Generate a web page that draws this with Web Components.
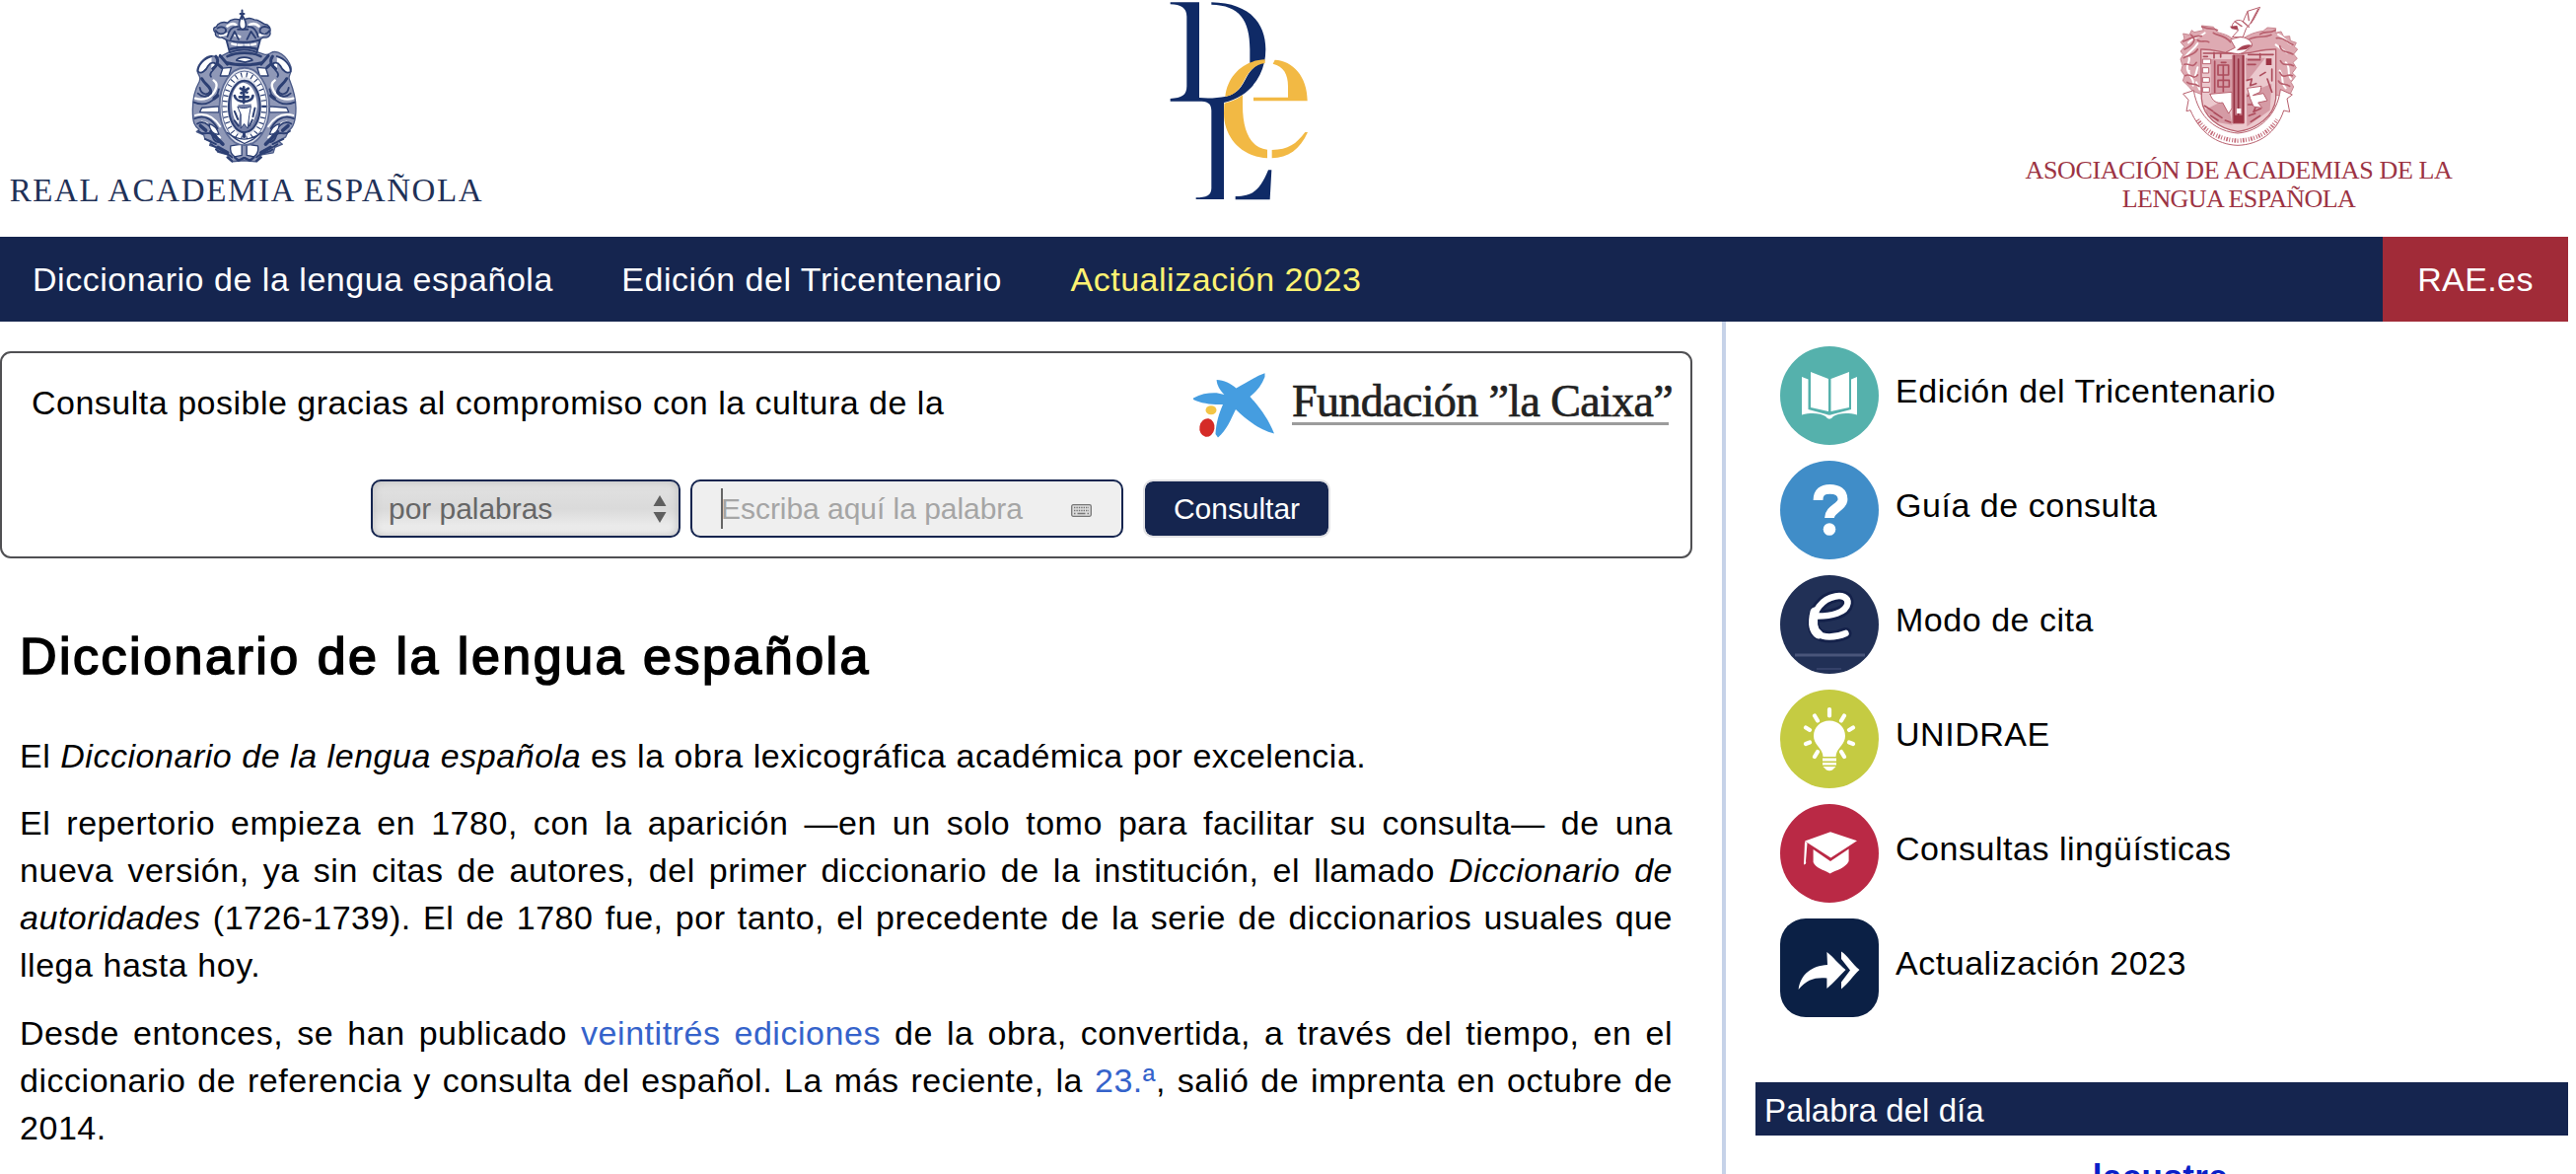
<!DOCTYPE html>
<html lang="es">
<head>
<meta charset="utf-8">
<title>Diccionario de la lengua española</title>
<style>
html,body{margin:0;background:#fff}
body{height:1190px;overflow:hidden;font-family:"Liberation Sans",Arial,sans-serif;font-size:34px;letter-spacing:.53px;color:#000}
</style>
</head>
<body>
<dle-page></dle-page>
<script>
const define=(name,html,setup)=>customElements.define(name,class extends HTMLElement{
  connectedCallback(){
    if(this.shadowRoot)return;
    const t=document.createElement('template');
    t.innerHTML=html;
    const root=this.attachShadow({mode:'open'});
    root.append(t.content.cloneNode(true));
    if(setup)setup(this,root);
  }
});

/* Crest of the Real Academia: crown, mantling and oval medallion */
define('rae-crest',`<style>:host{display:block;width:107px;height:158px}svg{display:block;width:100%;height:100%}</style>
<svg viewBox="580 28 322 474" fill="none" stroke="#2c3f73" stroke-width="5.500" stroke-linecap="round" stroke-linejoin="round">
<path fill="#8f98b7" stroke="#4a5a88" stroke-width="4" d="M735 150C690 150 668 185 650 172C625 165 600 195 598 215C600 232 612 232 604 250C590 275 584 305 584 335C584 375 590 385 604 395L596 402L618 412L622 425L640 430L636 444L655 450L660 464L690 472L705 493L740 490L775 493L795 472L830 466L835 450L858 440L845 430L868 418L876 400C892 390 899 360 899 330C899 300 890 270 880 245C872 232 888 225 884 205C872 170 842 150 822 162C800 178 785 150 735 150Z"/>
<g id="h">
<path fill="#fff" d="M642 172C618 178 600 200 600 218C610 228 625 215 632 200C640 188 655 190 655 200C652 214 630 222 640 234"/>
<path fill="#fff" stroke-width="4" d="M676 208L702 206L694 232L668 232Z"/>
<path stroke-width="9" d="M655 172C665 185 660 200 645 210M612 240C622 260 640 262 640 282M668 170L690 196M660 195L672 206"/>
<path stroke="#fff" stroke-width="7" d="M592 300C615 308 645 300 655 270C660 258 655 250 648 245"/>
<path d="M588 312C620 326 656 312 664 272M606 268C610 290 630 292 638 278M600 285C615 300 632 295 640 285"/>
<path fill="#fff" stroke-width="4" d="M612 329L664 325L664 343L606 342Z"/>
<path stroke="#fff" stroke-width="6" d="M592 352C625 343 650 358 668 386M612 372C640 375 650 400 668 420"/>
<path d="M590 362C620 348 645 365 660 392M598 378C622 362 640 388 656 416M602 400C618 415 628 402 640 408C650 416 640 428 662 434M622 424L655 440M640 440C656 455 670 450 686 462M655 456C670 470 688 462 704 480"/>
<path stroke-width="11" d="M640 402C650 418 662 424 676 440M608 384L624 398M650 300L660 292M662 450L690 466"/>
<path fill="#fff" stroke-width="4" d="M634 378C652 382 660 395 664 410C648 412 636 398 634 378ZM700 445L734 440V474L712 478C700 470 698 456 700 445Z"/>
<path stroke-width="7" d="M712 480L724 490L740 482M690 480L704 492"/>
</g>
<use href="#h" transform="translate(1483 0) scale(-1 1)"/>
<ellipse cx="742" cy="325" rx="76" ry="118" fill="#dfe2ec" stroke="#5c6a95"/>
<ellipse cx="742" cy="325" rx="60" ry="97" stroke="#fff" stroke-width="15"/>
<ellipse cx="742" cy="325" rx="60" ry="97" stroke-width="15" stroke-dasharray="3.500 13" stroke-linecap="butt"/>
<ellipse cx="742" cy="325" rx="69" ry="108" stroke="#5c6a95" stroke-width="3"/>
<ellipse cx="742" cy="325" rx="48" ry="79" fill="#7580a6" stroke-width="6"/>
<path fill="#fff" stroke="none" d="M704 300C708 270 724 254 738 252C768 256 780 290 781 325C778 355 766 380 758 388L752 345L764 318L722 320L728 345L724 385C706 362 702 330 704 300Z"/>
<path fill="#fff" stroke-width="3" d="M722 326C735 333 752 330 762 324L757 350L752 392L741 378L731 392V350Z"/>
<path stroke-width="8" d="M712 292C716 316 766 316 768 292M740 266V314M730 270L750 282M754 270L732 284M727 296H754"/>
<path stroke-width="6" d="M712 340L722 364M774 330L768 356M712 368L724 384M766 366L758 384"/>
<path fill="#fff" stroke-width="4" d="M690 405C725 432 758 432 794 405L770 424L742 438L716 424Z"/>
<path stroke-width="9" d="M741 408V418"/>
<path fill="#8791b2" d="M686 118L697 160C724 150 756 150 780 160L790 122C760 132 715 132 686 118Z"/>
<path stroke="#fff" stroke-width="7" stroke-dasharray="12 8" d="M704 134C728 140 755 140 778 134"/>
<path stroke-width="8" d="M700 150C726 143 758 143 780 150M690 172C720 158 764 158 792 172"/>
<path fill="#fff" d="M718 184C725 172 758 172 766 184L744 190Z"/>
<path stroke-width="9" d="M690 192C718 200 768 200 795 192"/>
<path fill="#8791b2" stroke-width="4" d="M735 64C722 54 700 58 690 70C676 64 660 72 656 82C644 84 648 96 654 100C650 112 664 116 672 114L690 123C724 130 756 130 786 122L800 114C812 118 824 108 820 98C824 86 816 74 804 74C788 66 786 60 772 60C760 54 745 56 735 64Z"/>
<path stroke="#fff" stroke-width="8" d="M690 80C700 72 710 72 716 76M757 76C770 70 780 74 786 80M668 108L690 104M714 108L728 112M786 108L804 104"/>
<path d="M660 86C675 78 690 86 684 98C675 108 660 104 655 94M818 86C802 76 786 84 790 98C798 108 814 104 818 94M690 112C695 90 705 80 722 82M784 112C778 90 766 80 752 82M700 120L712 96L724 120M750 120L762 96L776 116"/>
<path fill="#fff" stroke-width="5" d="M735 46C722 68 724 88 737 90C750 88 750 68 735 46Z"/>
<path stroke-width="6" d="M735 32V58M729 42H741M722 90H752"/>
</svg>`);

/* Crest of the Asociación de Academias: quartered shield, mantling and ribbon */
define('asale-crest',`<style>:host{display:block;width:120px;height:144px}svg{display:block;width:100%;height:100%}</style>
<svg viewBox="545 18 360 432" fill="none" stroke="#b8606e" stroke-width="4" stroke-linecap="round" stroke-linejoin="round">
<path fill="#deaab2" stroke-width="3" stroke="#c98690" d="M720 135C705 108 680 104 660 98L648 82L612 78L618 92L590 98L582 92L575 106L556 102L560 118L548 128L560 142L548 156L556 166L548 180L554 200L550 215L560 230L555 246L572 262L584 276L620 290H830L880 290L892 264L884 250L898 232L888 222L900 206L890 190L903 178L892 165L904 150L894 142L900 130L882 124L880 110L862 112L854 96L836 100L838 86L812 84L800 94C770 98 740 110 720 135Z"/>
<g stroke="#fff" stroke-width="6"><path d="M572 130C590 110 610 112 622 100M565 170C580 150 590 150 600 132M572 220C560 200 578 190 574 176M586 260C592 235 570 235 574 215M600 205L592 235M845 105C865 112 870 130 885 135M872 160C855 150 850 145 838 136M868 190C885 205 870 225 884 240M850 215C865 235 850 250 868 268M596 250L606 272"/></g>
<g stroke-width="5"><path d="M556 126C580 118 590 105 612 110M614 82C640 92 650 84 660 92M560 150C585 138 600 120 580 106M558 176C570 166 588 170 600 150M560 196C575 190 585 210 596 190M562 230C580 220 586 246 600 228M568 250C578 260 590 250 604 262M600 122C610 132 622 120 634 128M890 136C870 130 866 112 840 116M836 92C816 104 806 92 790 104M890 165C870 155 856 160 850 140M892 200C872 190 862 205 852 185M888 230C870 222 862 244 850 220M880 262C865 250 852 262 846 246M700 128C680 104 660 110 648 100M752 122C780 104 800 118 824 106"/></g>
<path fill="#ebc8cd" d="M610 150C650 148 690 166 720 163C755 166 795 148 838 150V300C832 355 780 392 722 400C665 392 616 355 612 300Z"/>
<path fill="#d59ba5" stroke="none" d="M640 180H706V285H640ZM746 176H806L748 250ZM620 335L690 300L706 380L660 372ZM748 285L825 255L820 335L750 385Z"/>
<path fill="#c47a87" stroke-width="3" d="M708 168H741V375H708Z"/>
<path stroke="#963243" stroke-width="5" d="M711 170V372M738 170V372M724 180V350"/>
<path fill="#9e3445" stroke="none" d="M808 178H825V198H808ZM710 350H740V374H710Z"/>
<path fill="#fff" stroke="none" d="M719 330H732V345H719Z"/>
<g stroke="#ad4c5c"><path stroke-width="5" d="M618 162H700M618 172H630M650 160V176M670 162V174M662 198V228H694V198ZM672 190H686M662 244H696V264H662ZM678 198V278M652 186V282M754 166H830M754 182H790M752 196H776M790 164V176M750 244L765 240L760 260L778 254M790 230L806 220M826 210V246M812 240L826 280M752 292L765 286M754 318H780L770 340L792 330M756 352L775 345M622 322L646 338M640 352L662 366M650 342L674 358M684 366L700 372M762 370L790 352"/></g>
<path fill="#fff" stroke-width="3" d="M616 180H640V194H616ZM616 206H634V222H616ZM616 236H636V250H616ZM616 266H636V280H616Z"/>
<path fill="#fff" stroke-width="3" d="M638 286L704 280V330L694 345L676 312C660 316 644 308 638 286ZM752 268L794 262L790 280L768 290L800 284L812 306L784 312L796 328L770 324L760 300Z"/>
<path fill="#fff" stroke-width="3" d="M557 285L588 275C602 360 660 400 722 405C788 400 842 350 852 272L888 288L872 300L880 340L862 336C840 405 785 440 722 442C656 440 605 400 578 335L566 338L572 305Z"/>
<path stroke="#c46b79" stroke-width="13" stroke-linecap="butt" stroke-dasharray="3 4 5 4 3 6" d="M600 364C626 404 674 425 722 428C776 425 816 406 842 364"/>
<path fill="#fff" stroke-width="3" d="M688 158L714 145L700 120L730 112C760 115 770 135 764 142C750 150 744 162 724 164ZM706 112L724 92L704 84C706 58 730 58 738 66L752 34L790 22L770 60L748 86L738 112Z"/>
<path fill="#a64354" stroke="none" d="M718 154C732 138 752 132 766 138L748 150ZM698 80L720 78L724 90L704 88Z"/>
<path stroke-width="4" d="M738 66L756 82M752 36L756 62M784 28L762 70M714 66L734 80"/>
</svg>`);

define('dle-logo',`<style>:host{display:block;width:200px;height:220px}svg{display:block;width:100%;height:100%}</style>
<svg viewBox="0 0 600 660"><g fill="#0f2a66">
<path d="M80 7H168V297C190 299 220 299 250 293C285 286 298 262 312 235C325 208 345 194 366 189C352 250 310 296 243 312V606H158V601C190 600 205 594 205 572V336C205 312 190 308 168 308H80V300C115 298 130 290 130 262V50C130 24 112 14 80 13Z"/>
<path d="M205 7C315 9 370 65 370 150Q370 170 366 190L322 205V150C322 60 290 16 205 14Z"/>
<path d="M278 597C335 597 354 574 378 517H388L383 607H278Z"/></g>
<g fill="#f2b944">
<path d="M368 181C305 183 254 228 247 294C280 288 294 266 306 242C320 214 338 197 368 192Z"/>
<path d="M244 314C270 308 286 300 300 289V320C300 400 325 450 375 455V481C300 478 243 420 243 345Z"/>
<path d="M392 194L398 182C452 184 497 232 497 307H333V296H438V262C438 226 425 202 392 194Z"/>
<path d="M389 456C440 455 462 438 490 402H498C474 455 438 480 389 481Z"/></g></svg>`);

define('site-header',`<style>
:host{display:flex;height:240px;width:2604px;justify-content:space-between;font-family:"Liberation Serif","Times New Roman",serif}
.brand{display:flex;flex-direction:column;align-items:center;white-space:nowrap}
.rae{width:484px;margin-left:8px;padding-top:9px;color:#1f3157}
.rae b{font-weight:400;font-size:33px;letter-spacing:1.62px;line-height:40px;margin-top:6px;margin-left:0}
.asale{width:440px;margin-right:114px;padding-top:6px;color:#9c3343}
.asale b{font-weight:400;font-size:26px;line-height:29px;letter-spacing:-.36px;text-align:center;margin-top:8px}
.asale i{font-style:normal;letter-spacing:-.6px}
dle-logo{margin-left:-22px}
rae-crest{margin-left:-6px}
</style>
<div class="brand rae"><rae-crest></rae-crest><b>REAL ACADEMIA ESPAÑOLA</b></div>
<dle-logo></dle-logo>
<div class="brand asale"><asale-crest></asale-crest><b>ASOCIACIÓN DE ACADEMIAS DE LA<br><i>LENGUA ESPAÑOLA</i></b></div>`);

define('nav-bar',`<style>
:host{display:flex;width:2604px;height:86px;background:#15254f;color:#fff;line-height:87px;justify-content:space-between}
nav{display:flex;gap:69.500px;padding-left:33px}
::slotted(a){white-space:nowrap}
.site{width:188px;background:#a12b38;text-align:center;letter-spacing:.4px}
</style><nav><slot></slot></nav><div class="site"><slot name="site"></slot></div>`);

define('caixa-logo',`<style>
:host{display:flex;width:484px;height:68px;align-items:flex-start}
svg{width:84px;height:68px;flex:none}
span{margin-left:16px;width:382px;height:50px;border-bottom:3px solid #9c9c9c;font:46px/58px "Liberation Serif",serif;letter-spacing:-.62px;color:#222;-webkit-text-stroke:.7px #222;white-space:nowrap;box-sizing:content-box}
</style>
<svg viewBox="0 0 84 68"><path fill="#459de0" d="M0 25.500C8 21 16 20 23.600 20.300L31.400 22C27 17 24 13 23.600 7C31 7 38 11 43.500 15.500C52 11 62 4 72.500 .3V4C69 13 64 19 57.500 24C69 37 76 47 82 61.500C66 57 53 47 43 37C38 47 34 58 25 65.600L22.500 62C23 51 26 41 30 32C20 32.500 8 31 0 27Z"/><ellipse cx="18" cy="37.700" rx="5.500" ry="4.500" fill="#f3c545"/><ellipse cx="14" cy="55.500" rx="7.600" ry="9.300" fill="#d52b27" transform="rotate(10 14 55)"/></svg>
<span>Fundación ”la Caixa”</span>`);

define('search-form',`<style>
:host{display:block;box-sizing:border-box;width:1716px;height:210px;margin-top:30px;border:2px solid #505053;border-radius:11px;padding:20px 20px 0 30px}
.top{display:flex;justify-content:space-between;height:68px;line-height:60px;letter-spacing:.5px}
.row{display:flex;height:59px;margin:40px 0 0 344px;font-size:30px;letter-spacing:-.04px;line-height:58px}
.row>div{box-sizing:border-box}
.sel{width:314px;border:2px solid #15254f;border-radius:10px;background:linear-gradient(#e2e2e2,#dadada 50%,#f4f4f4);box-shadow:inset 0 0 10px #bcbcbc;color:#666;padding:0 12px 0 16px;display:flex;justify-content:space-between;align-items:center}
.sel svg{width:14px;height:28px}
.inp{width:439px;margin-left:10px;border:2px solid #15254f;border-radius:10px;background:#efefef;color:#a5a5a5;padding:0 30px 0 29px;display:flex;align-items:center}
.caret{width:2px;height:41px;background:#666;margin-right:-2px}
.inp svg{width:21px;height:13px;margin-left:auto;margin-top:3px}
.btn{width:190px;margin-left:20px;border:2px solid #e1e1e4;border-radius:10px;background:#15254f;background-clip:padding-box;color:#fff;text-align:center;line-height:56px}
</style>
<div class="top"><span><slot></slot></span><caixa-logo></caixa-logo></div>
<div class="row">
<div class="sel"><span>por palabras</span><svg viewBox="0 0 14 28" fill="#5f5f5f"><path d="M7 0L13.500 11H.5ZM7 28L13.500 17H.5Z"/></svg></div>
<div class="inp"><i class="caret"></i><span>Escriba aquí la palabra</span><svg viewBox="0 0 21 13"><rect x=".7" y=".7" width="19.600" height="11.600" rx="1.500" fill="#ddd" stroke="#777" stroke-width="1.300"/><path d="M3 3.500H18M3 6.500H18" stroke="#777" stroke-width="1.500" stroke-dasharray="1.400 1"/><path d="M3 9.500H4.500M6.500 9.500H14.500M16.500 9.500H18" stroke="#777" stroke-width="1.500"/></svg></div>
<div class="btn">Consultar</div></div>`);

define('dictionary-article',`<style>
:host{display:block;padding:69px 20px 0;width:1676px}
::slotted(h1){margin:0 0 47px;font-size:52px;line-height:60px;font-weight:400;letter-spacing:2.500px;-webkit-text-stroke:1.700px #000}
::slotted(p){margin:0 0 20.300px;line-height:48px;text-align:justify}
</style><slot></slot>`);

const ICONS={
book:`<circle cx="50" cy="50" r="50" fill="#55b1ac"/><g fill="#fff"><path d="M31 26L49 33V66L31 62ZM70 26L51.500 33V66L70 62Z"/><path d="M22 31L28.500 33.500V64L47 69Q50 70.500 53 69L72 64V33.500L78 31V69.500C68 67 59 68 54 71Q50 76.500 46 71C41 68 32 67 22 69.500Z"/></g>`,
question:`<circle cx="50" cy="50" r="50" fill="#408dc8"/><path d="M38.500 40C38.500 32 43 28.800 50.500 28.800C58.500 28.800 63.500 32.500 63.500 39C63.500 47 50 49 50 58" fill="none" stroke="#fff" stroke-width="9.800"/><circle cx="50" cy="69.500" r="6.300" fill="#fff"/>`,
e:`<clipPath id="c"><circle cx="50" cy="50" r="50"/></clipPath><g clip-path="url(#c)"><rect width="100" height="100" fill="#213056"/><path d="M15 81H86" stroke="#49557a" stroke-width="3"/><path d="M37 95H62" stroke="#35426a" stroke-width="2"/></g><g fill="none" stroke-linecap="round"><path d="M35 41.500C52 42 67 38 68.500 28.500C69 22 62 20 56 21.500C42 24 33.500 37 33.500 48.500C33.500 59 41 62.500 50 62.500C57 62.500 62 61 66.500 59" stroke="#14214a" stroke-width="12"/><path d="M35 41.500C52 42 67 38 68.500 28.500C69 22 62 20 56 21.500C42 24 33.500 37 33.500 48.500C33.500 59 41 62.500 50 62.500C57 62.500 62 61 66.500 59" stroke="#fff" stroke-width="6.500"/><path d="M35 37C32.500 47 33 56 39 60" stroke="#fff" stroke-width="9"/></g>`,
bulb:`<circle cx="50" cy="50" r="50" fill="#c5cb42"/><path fill="#fff" d="M50 31.500C59 31.500 66 38 66 47C66 56 57 59 56.500 68H43.500C43 59 34 56 34 47C34 38 41 31.500 50 31.500ZM43 69.500H57V72.500H43ZM43 74H57V76.500H43ZM43.500 78H56.500L53 81.500Q50 83 47 81.500Z"/><path stroke="#fff" stroke-width="4.200" stroke-linecap="round" d="M50 20V26.500M35 26.500L38 31.500M65 26.500L62 31.500M26 38.500L30 41M74 38.500L70 41M26 55L30 53.500M74 55L70 53.500M35 68L38 63M65 68L62 63"/>`,
cap:`<circle cx="50" cy="50" r="50" fill="#ba2945"/><path fill="#fff" d="M25 37.500L51 28.300L78 37.300L51.400 54.500ZM33.600 46L51 58L69.600 45.500V58C66 65 58 66.500 50.600 70.500C44 66.500 36 65 33.600 59ZM25 38L27.500 39.500L26 58Q27 61 24 61.500L24.500 50Z"/>`,
arrows:`<rect width="100" height="100" rx="26" fill="#0b2045"/><path fill="#fff" d="M18.600 72C21 56 32 48 48 47L47.400 34C54 39 59 46 66.500 52C60 58 55 65 47.400 71V60.500C35 59.500 27 62 18.600 72ZM62 33.500C69 38 73 46 80.500 52C74 58 69 66 62 71.500V64.500L71 52.500L62 41Z"/>`
};
define('side-link',`<style>
:host{display:flex;height:100px;gap:17px;line-height:91px;white-space:nowrap}
svg{display:block;width:100px;height:100px;flex:none}
</style><svg viewBox="0 0 100 100"></svg><span><slot></slot></span>`,(el,root)=>{root.querySelector('svg').innerHTML=ICONS[el.getAttribute('icon')]});

define('word-of-day',`<style>
:host{display:block;margin-top:66px}
header{height:54px;background:#15254f;color:#fff;font-size:33px;letter-spacing:.05px;line-height:57px;padding-left:9px}
.word{color:#0a1fc8;font-weight:700;font-size:35px;letter-spacing:.4px;text-align:center;line-height:50px;margin-top:17px;padding-right:3px}
</style><header>Palabra del día</header><div class="word"><slot></slot></div>`);

define('side-bar',`<style>
:host{display:block;box-sizing:border-box;width:858px;border-left:4px solid #c6d2e8;padding:25px 0 0 30px;height:864px}
.links{display:flex;flex-direction:column;gap:16px;padding-left:25px}
</style><div class="links"><slot></slot></div><slot name="word"></slot>`);

define('dle-page',`<style>
:host{display:block}
main{display:flex;width:2604px;justify-content:space-between}
.new{color:#fdf272}
p a{color:#3563cb}
</style>
<site-header></site-header>
<nav-bar><a>Diccionario de la lengua española</a><a>Edición del Tricentenario</a><a class="new">Actualización 2023</a><a slot="site">RAE.es</a></nav-bar>
<main><section>
<search-form>Consulta posible gracias al compromiso con la cultura de la</search-form>
<dictionary-article><h1>Diccionario de la lengua española</h1>
<p>El <em>Diccionario de la lengua española</em> es la obra lexicográfica académica por excelencia.</p>
<p>El repertorio empieza en 1780, con la aparición —en un solo tomo para facilitar su consulta— de una nueva versión, ya sin citas de autores, del primer diccionario de la institución, el llamado <em>Diccionario de autoridades</em> (1726-1739). El de 1780 fue, por tanto, el precedente de la serie de diccionarios usuales que llega hasta hoy.</p>
<p>Desde entonces, se han publicado <a>veintitrés ediciones</a> de la obra, convertida, a través del tiempo, en el diccionario de referencia y consulta del español. La más reciente, la <a>23.ª</a>, salió de imprenta en octubre de 2014.</p>
</dictionary-article></section>
<side-bar>
<side-link icon="book">Edición del Tricentenario</side-link>
<side-link icon="question">Guía de consulta</side-link>
<side-link icon="e">Modo de cita</side-link>
<side-link icon="bulb">UNIDRAE</side-link>
<side-link icon="cap">Consultas lingüísticas</side-link>
<side-link icon="arrows">Actualización 2023</side-link>
<word-of-day slot="word">lacustre</word-of-day>
</side-bar></main>`);
</script>
</body>
</html>
